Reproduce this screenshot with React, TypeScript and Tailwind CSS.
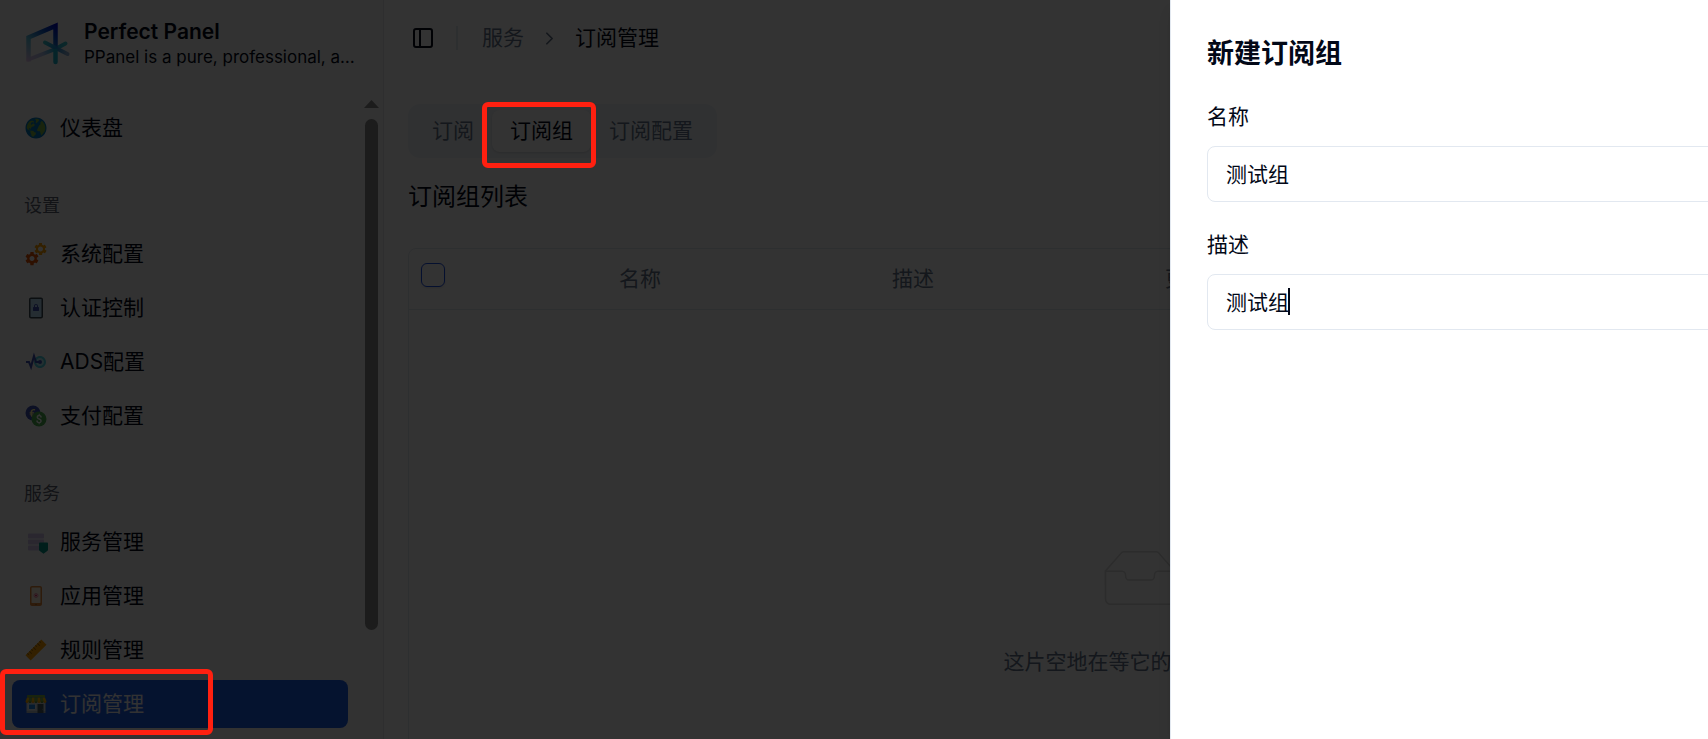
import { useState } from "react";
import type { ReactNode } from "react";
import { ChevronRight, PanelLeft } from "lucide-react";
import {
  FcCurrencyExchange,
  FcDataProtection,
  FcElectricalSensor,
  FcGlobe,
  FcLockPortrait,
  FcRuler,
  FcServices,
  FcShop,
  FcTouchscreenSmartphone,
} from "react-icons/fc";
import clsx from "clsx";

type NavItem = { title: string; icon: ReactNode };
type NavGroup = { label?: string; items: NavItem[] };

const groups: NavGroup[] = [
  { items: [{ title: "仪表盘", icon: <FcGlobe /> }] },
  {
    label: "设置",
    items: [
      { title: "系统配置", icon: <FcServices /> },
      { title: "认证控制", icon: <FcLockPortrait /> },
      { title: "ADS配置", icon: <FcElectricalSensor /> },
      { title: "支付配置", icon: <FcCurrencyExchange /> },
    ],
  },
  {
    label: "服务",
    items: [
      { title: "服务管理", icon: <FcDataProtection /> },
      { title: "应用管理", icon: <FcTouchscreenSmartphone /> },
      { title: "规则管理", icon: <FcRuler /> },
      { title: "订阅管理", icon: <FcShop /> },
    ],
  },
];

const tabs = ["订阅", "订阅组", "订阅配置"];

function Logo() {
  return (
    <svg viewBox="2 -1 48 48" className="size-12 shrink-0" fill="none">
      <defs>
        <linearGradient id="frame" x1="34" y1="4" x2="5" y2="40" gradientUnits="userSpaceOnUse">
          <stop offset="0" stopColor="#0008c8" />
          <stop offset="0.25" stopColor="#0a50c8" />
          <stop offset="0.6" stopColor="#5fc0dc" />
          <stop offset="1" stopColor="#e4c4ec" />
        </linearGradient>
        <linearGradient id="base" x1="5" y1="40" x2="44" y2="22" gradientUnits="userSpaceOnUse">
          <stop offset="0" stopColor="#e4c4ec" />
          <stop offset="0.4" stopColor="#b0c0ec" />
          <stop offset="0.7" stopColor="#22b0d8" />
          <stop offset="1" stopColor="#3cc4cc" />
        </linearGradient>
        <linearGradient id="arm" x1="22" y1="24" x2="44" y2="34" gradientUnits="userSpaceOnUse">
          <stop offset="0" stopColor="#3cc4cc" />
          <stop offset="0.5" stopColor="#1a8cd8" />
          <stop offset="1" stopColor="#8cb0d8" />
        </linearGradient>
      </defs>
      <path d="M6.500 38.500L33.500 28L43.500 22.500" stroke="url(#base)" strokeWidth="4" strokeLinecap="round" />
      <path d="M6.500 40.500V16.500L33.500 5V28" stroke="url(#frame)" strokeWidth="4.500" />
      <path d="M23 21.500L45.500 33" stroke="url(#arm)" strokeWidth="4" strokeLinecap="round" />
      <path d="M33.500 30V41" stroke="#1cb4cc" strokeWidth="4.500" strokeLinecap="round" />
    </svg>
  );
}

function Sidebar() {
  return (
    <aside className="flex w-96 shrink-0 flex-col border-r border-[#e5e7eb] bg-[#fafafa]">
      <div className="flex h-[92px] items-center gap-3 pr-6 pb-1 pl-6">
        <Logo />
        <div className="min-w-0 flex-1">
          <div className="text-[21px] leading-[26px] font-semibold">Perfect Panel</div>
          <div className="text-[17px] leading-6 whitespace-nowrap">PPanel is a pure, professional, a…</div>
        </div>
      </div>
      <div className="flex min-h-0 flex-1">
        <nav className="mr-1 flex min-w-0 flex-1 flex-col gap-1.5 overflow-hidden">
          {groups.map((g, i) => (
            <div key={i} className="shrink-0 p-3">
              {g.label && <div className="flex h-12 items-center px-3 text-lg text-[#5b6270]">{g.label}</div>}
              <ul className="flex flex-col gap-1.5">
                {g.items.map((item) => (
                  <li key={item.title}>
                    <a
                      href="#"
                      className={clsx(
                        "flex h-12 items-center gap-3 rounded-lg px-3",
                        item.title === "订阅管理" && "bg-[#1d5fe8] text-[#f8fafc]",
                      )}
                    >
                      <span className="text-2xl">{item.icon}</span>
                      {item.title}
                    </a>
                  </li>
                ))}
              </ul>
            </div>
          ))}
        </nav>
        <div className="mr-1 flex w-[15px] flex-col items-center gap-[11px] pt-2">
          <svg viewBox="0 0 15 8" className="h-2 w-[15px]">
            <path d="M0 8L7.500 0L15 8z" fill="#8b8b8b" />
          </svg>
          <div className="h-4/5 w-[13px] rounded-full bg-[#8b8b8b]" />
        </div>
      </div>
    </aside>
  );
}

function EmptyBox() {
  return (
    <svg viewBox="0 0 64 41" className="h-[62px] w-24" fill="none" stroke="#d9d9d9">
      <g transform="translate(0 1)">
        <path d="M55 12.760L44.854 1.258C44.367.474 43.656 0 42.907 0H21.093c-.749 0-1.460.474-1.947 1.257L9 12.761V22h46v-9.240z" />
        <path
          fill="#fff"
          d="M41.613 15.931c0-1.605.994-2.930 2.227-2.931H55v18.137C55 33.260 53.680 35 52.050 35h-40.100C10.320 35 9 33.259 9 31.137V13h11.160c1.233 0 2.227 1.323 2.227 2.928v.022c0 1.605 1.005 2.901 2.237 2.901h14.752c1.232 0 2.237-1.308 2.237-2.913v-.007z"
        />
      </g>
    </svg>
  );
}

function GroupTable() {
  return (
    <div className="overflow-hidden rounded-lg border border-[#e2e8f0]">
      <table className="w-full table-fixed text-left text-[#64748b]">
        <thead>
          <tr className="h-[60px] border-b border-[#e2e8f0]">
            <th className="w-[198px] px-3 pt-3.5 align-top">
              <input
                type="checkbox"
                aria-label="全选"
                className="block size-6 appearance-none rounded-md border border-[#1d4fe8] shadow-sm"
              />
            </th>
            <th className="w-[273px] px-3 font-normal">名称</th>
            <th className="w-[273px] px-3 font-normal">描述</th>
            <th className="w-[273px] px-3 font-normal">更新时间</th>
            <th className="px-3 font-normal">操作</th>
          </tr>
        </thead>
        <tbody>
          <tr>
            <td colSpan={5} className="py-60">
              <div className="flex flex-col items-center gap-[34px]">
                <EmptyBox />
                <p>这片空地在等它的主人出现。</p>
              </div>
            </td>
          </tr>
        </tbody>
      </table>
    </div>
  );
}

function Field({
  id,
  label,
  value,
  onChange,
  caret,
}: {
  id: string;
  label: string;
  value: string;
  onChange: (v: string) => void;
  caret?: boolean;
}) {
  return (
    <div className="flex flex-col gap-3.5">
      <label htmlFor={id} className="leading-[30px]">
        {label}
      </label>
      <div className="relative">
        <input
          id={id}
          value={value}
          onChange={(e) => onChange(e.target.value)}
          className="block h-14 w-full rounded-lg border border-[#e2e8f0] bg-white px-[18px] pb-0.5 caret-transparent outline-none"
        />
        {caret && <span className="absolute top-3.5 left-[81px] h-[27px] w-0.5 bg-[#020817]" />}
      </div>
    </div>
  );
}

function GroupSheet() {
  const [name, setName] = useState("测试组");
  const [description, setDescription] = useState("测试组");

  return (
    <section
      role="dialog"
      aria-labelledby="sheet-title"
      className="absolute inset-y-0 right-0 w-[726px] border-l border-[#e2e8f0] bg-white px-9 pt-9 shadow-lg"
    >
      <h2 id="sheet-title" className="text-[27px] leading-9 font-bold">
        新建订阅组
      </h2>
      <form className="mt-[30px] flex flex-col gap-7">
        <Field id="name" label="名称" value={name} onChange={setName} />
        <Field id="description" label="描述" value={description} onChange={setDescription} caret />
      </form>
    </section>
  );
}

export default function App() {
  const [tab, setTab] = useState("订阅组");

  return (
    <div className="h-screen w-full overflow-hidden bg-white font-['Inter','Noto_Sans_CJK_SC',sans-serif] text-[21px] leading-8 font-normal text-[#020817]">
      {/* the console never gets narrower than this, the right side is clipped instead */}
      <div className="relative flex h-full min-w-[1896px] overflow-hidden">
        <Sidebar />
        <main className="min-w-0 flex-1 px-6">
          <header className="flex h-[76px] items-center">
            <button type="button" aria-label="Toggle Sidebar" className="px-[3px]">
              <PanelLeft className="size-6" />
            </button>
            <div className="ml-[18px] h-6 w-0.5 bg-[#e2e8f0]" />
            <nav className="ml-6 flex items-center gap-[15px]">
              <a href="#" className="text-[#64748b]">
                服务
              </a>
              <ChevronRight className="size-[21px] text-[#64748b]" />
              <span>订阅管理</span>
            </nav>
          </header>
          <div role="tablist" className="mt-7 inline-flex rounded-xl bg-[#f1f5f9] p-1.5 align-top text-[#64748b]">
            {tabs.map((t) => (
              <button
                key={t}
                type="button"
                role="tab"
                aria-selected={t === tab}
                onClick={() => setTab(t)}
                className={clsx("h-[42px] rounded-lg px-[18px]", t === tab && "bg-white text-[#020817] shadow")}
              >
                {t}
              </button>
            ))}
          </div>
          <h1 className="mt-3 mb-6 flex h-[54px] items-center text-2xl">{tab}列表</h1>
          <GroupTable />
        </main>

        <div className="absolute inset-0 bg-black/80" />
        <GroupSheet />

        {/* walkthrough marks */}
        <div className="absolute top-[102px] left-[482px] h-[66px] w-[114px] rounded-md border-5 border-[#ff2010]" />
        <div className="absolute bottom-1 left-0 h-[66px] w-[213px] rounded-md border-5 border-[#ff2010]" />
      </div>
    </div>
  );
}
